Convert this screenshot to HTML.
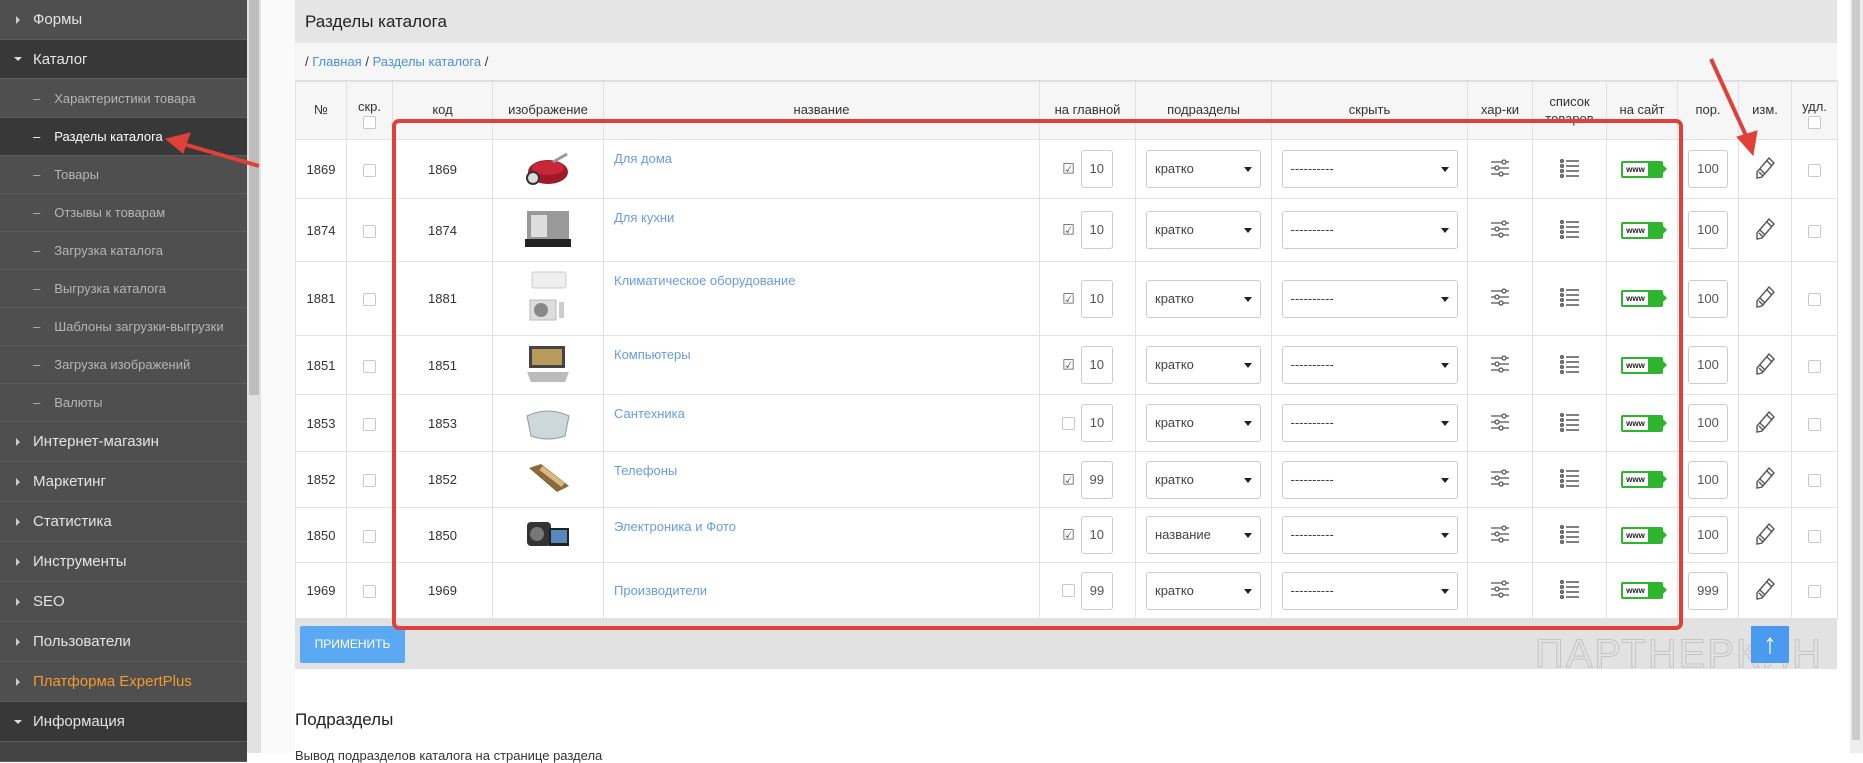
<!DOCTYPE html>
<html><head><meta charset="utf-8"><style>
*{box-sizing:border-box;margin:0;padding:0}
body{width:1863px;height:753px;overflow:hidden;background:#fff;font-family:"Liberation Sans",sans-serif;position:relative;color:#333}
#side{position:absolute;left:0;top:0;width:247px;height:753px;background:#4f4f4f}
#side div{position:absolute;left:0;width:247px;border-bottom:1px solid #5c5c5c;color:#e4e4e4;font-size:15px;display:flex;align-items:center;padding-left:33px}
#side div.sub{font-size:13px;color:#b5b5b5;padding-left:33px}
#side div.sub:before{content:"–";margin-right:14px}
#side div.m:before{content:"";position:absolute;left:16px;border-left:4px solid #ccc;border-top:4px solid transparent;border-bottom:4px solid transparent}
#side div.o:before{content:"";position:absolute;left:14px;border-top:4px solid #ddd;border-left:4px solid transparent;border-right:4px solid transparent}
#side .dk{background:#383838}
#scr{position:absolute;left:247px;top:0;width:14px;height:753px;background:#e2e2e2}
#scr i{position:absolute;left:2px;top:0;width:10px;height:395px;background:#bdbdbd}
#gut{position:absolute;left:261px;top:0;width:34px;height:753px;background:#fafafa}
#rs{position:absolute;left:1850px;top:0;width:13px;height:753px;background:#eee}
#rs i{position:absolute;left:2px;top:0;width:8px;height:740px;background:#ccc}
#hd{position:absolute;left:295px;top:0;width:1542px;height:43px;background:#e5e5e5;font-size:17px;padding:12px 10px;color:#222}
#bc{position:absolute;left:295px;top:43px;width:1542px;height:38px;background:#f6f6f6;font-size:13px;padding:11px 10px;border-bottom:1px solid #ddd}
#bc a{color:#4a90d9}
table{position:absolute;left:295px;top:81px;border-collapse:collapse;table-layout:fixed;width:1542px;font-size:13px}
td,th{border:1px solid #e2e2e2;text-align:center;vertical-align:middle;font-weight:normal;color:#333}
th{font-size:13px;background:#f6f6f6;vertical-align:bottom;padding-bottom:22px}
td.n{text-align:left;vertical-align:top;padding:11px 10px;color:#6a9be0}
.cb{display:inline-block;width:13px;height:13px;border:1px solid #c8c8c8;border-radius:2px;background:#fff;vertical-align:middle}
.inp{display:inline-block;width:32px;height:38px;border:1px solid #ccc;border-radius:3px;line-height:36px;text-align:center;vertical-align:middle;font-size:13px;color:#555;margin-left:6px}
.sel{display:inline-block;height:38px;border:1px solid #ccc;border-radius:3px;line-height:36px;text-align:left;padding-left:8px;font-size:13px;color:#444;position:relative;vertical-align:middle}
.sel:after{content:"";position:absolute;right:8px;top:16px;border-top:5px solid #222;border-left:4px solid transparent;border-right:4px solid transparent}
.chk{font-size:14px;color:#555;vertical-align:middle}
.www{display:inline-block;width:42px;height:17px;background:#2db52d;border-radius:2px;position:relative;vertical-align:middle}
.www b{position:absolute;left:2px;top:2px;width:25px;height:13px;background:#fff;font-size:8px;line-height:13px;color:#222;font-weight:bold;text-align:center}
#ft{position:absolute;left:295px;top:618px;width:1542px;height:51px;background:#e2e2e2}
#btn{position:absolute;left:300px;top:626px;width:105px;height:37px;background:#5aa9f2;color:#fff;font-size:12px;text-align:center;line-height:37px;border-radius:2px}
#up{position:absolute;left:1751px;top:626px;width:38px;height:37px;background:#4a9af0;color:#fff;font-size:28px;text-align:center;line-height:36px}
#wm{position:absolute;left:1535px;top:632px;font-size:40px;color:transparent;-webkit-text-stroke:1px #c4c4c4;letter-spacing:2px}
#red{position:absolute;left:392px;top:119px;width:1291px;height:511px;border:4px solid #e0403a;border-radius:7px}
h3{position:absolute;left:295px;top:710px;font-size:17px;font-weight:normal;color:#222}
#p{position:absolute;left:295px;top:748px;font-size:13px;color:#333}
</style></head><body>
<div id="side">
<div class="m" style="top:0;height:40px">Формы</div>
<div class="o dk" style="top:40px;height:39px">Каталог</div>
<div class="sub" style="top:79px;height:39px">Характеристики товара</div>
<div class="sub dk" style="top:118px;height:38px;color:#fff">Разделы каталога</div>
<div class="sub" style="top:156px;height:38px">Товары</div>
<div class="sub" style="top:194px;height:38px">Отзывы к товарам</div>
<div class="sub" style="top:232px;height:38px">Загрузка каталога</div>
<div class="sub" style="top:270px;height:38px">Выгрузка каталога</div>
<div class="sub" style="top:308px;height:38px">Шаблоны загрузки-выгрузки</div>
<div class="sub" style="top:346px;height:38px">Загрузка изображений</div>
<div class="sub" style="top:384px;height:38px">Валюты</div>
<div class="m" style="top:422px;height:40px">Интернет-магазин</div>
<div class="m" style="top:462px;height:40px">Маркетинг</div>
<div class="m" style="top:502px;height:40px">Статистика</div>
<div class="m" style="top:542px;height:40px">Инструменты</div>
<div class="m" style="top:582px;height:40px">SEO</div>
<div class="m" style="top:622px;height:40px">Пользователи</div>
<div class="m" style="top:662px;height:40px;color:#f39a2e">Платформа ExpertPlus</div>
<div class="o dk" style="top:702px;height:40px">Информация</div>
<div style="top:742px;height:20px;background:#444"></div>
</div>
<div id="scr"><i></i></div><div id="gut"></div><div id="rs"><i></i></div>
<div id="hd">Разделы каталога</div>
<div id="bc">/ <a>Главная</a> / <a>Разделы каталога</a> /</div>
<table>
<colgroup><col style="width:51px"><col style="width:46px"><col style="width:100px"><col style="width:111px"><col style="width:436px"><col style="width:96px"><col style="width:136px"><col style="width:196px"><col style="width:65px"><col style="width:74px"><col style="width:71px"><col style="width:61px"><col style="width:53px"><col style="width:46px"></colgroup>
<tr style="height:58px"><th>№</th><th style="padding-bottom:10px">скр.<br><span class="cb"></span></th><th>код</th><th>изображение</th><th>название</th><th>на главной</th><th>подразделы</th><th>скрыть</th><th>хар-ки</th><th style="padding-bottom:12px;line-height:17px;height:58px;overflow:hidden">список<br>товаров</th><th>на сайт</th><th>пор.</th><th>изм.</th><th style="padding-bottom:10px">удл.<br><span class="cb"></span></th></tr>
</table>
<div id="ft"></div>
<div id="btn">ПРИМЕНИТЬ</div>
<div id="wm">ПАРТНЕРКИН</div>
<div id="up">↑</div>
<div id="red"></div>
<svg style="position:absolute;left:0;top:0" width="1863" height="753"><g stroke="#e0403a" stroke-width="4" fill="#e0403a"><line x1="259" y1="166" x2="180" y2="143"/><polygon points="166,139 190,133 183,153" stroke-width="1"/><line x1="1711" y1="59" x2="1748" y2="140"/><polygon points="1753,155 1737,137 1757,131" stroke-width="1"/></g></svg>
<h3>Подразделы</h3>
<div id="p">Вывод подразделов каталога на странице раздела</div>
<script>
var S='<svg width="22" height="22" stroke="#555" fill="#fff" stroke-width="1.3"><line x1="2" y1="5" x2="20" y2="5"/><line x1="2" y1="11" x2="20" y2="11"/><line x1="2" y1="17" x2="20" y2="17"/><circle cx="15" cy="5" r="2"/><circle cx="8" cy="11" r="2"/><circle cx="12" cy="17" r="2"/></svg>';
var L='<svg width="22" height="22" stroke="#555" fill="none" stroke-width="1.5"><circle cx="3" cy="4" r="1.3"/><circle cx="3" cy="9" r="1.3"/><circle cx="3" cy="14" r="1.3"/><circle cx="3" cy="19" r="1.3"/><line x1="7" y1="4" x2="20" y2="4"/><line x1="7" y1="9" x2="20" y2="9"/><line x1="7" y1="14" x2="20" y2="14"/><line x1="7" y1="19" x2="20" y2="19"/></svg>';
var W='<span class="www"><b>www</b><span style="position:absolute;right:-4px;top:3px;border-left:5px solid #2db52d;border-top:5px solid transparent;border-bottom:5px solid transparent"></span></span>';
var P='<svg width="20" height="24" fill="none" stroke="#555" stroke-width="1.4"><path d="M14 2 L19 7 L7 21 L2 22 L2 16 Z M12 5 L17 10 M4 16 L8 20 M5 13 L10 18"/></svg>';
var im={h:'<svg width="50" height="40"><ellipse cx="25" cy="24" rx="20" ry="12" fill="#a0182a"/><ellipse cx="25" cy="20" rx="16" ry="7" fill="#c9263a"/><circle cx="10" cy="30" r="6" fill="#ddd" stroke="#333" stroke-width="2"/><path d="M30 14 L44 6" stroke="#999" stroke-width="3"/></svg>',
k:'<svg width="50" height="44"><rect x="4" y="4" width="42" height="30" fill="#999"/><rect x="8" y="8" width="16" height="22" fill="#ddd"/><rect x="2" y="32" width="46" height="8" fill="#222"/></svg>',
c:'<svg width="40" height="54"><rect x="4" y="2" width="34" height="16" rx="2" fill="#eee" stroke="#ccc"/><rect x="2" y="30" width="26" height="20" fill="#ddd" stroke="#bbb"/><circle cx="13" cy="40" r="7" fill="#888"/><rect x="31" y="32" width="5" height="16" fill="#ccc"/></svg>',
p:'<svg width="50" height="44"><rect x="6" y="4" width="36" height="22" fill="#444"/><rect x="9" y="7" width="30" height="16" fill="#b89a5a"/><path d="M4 30 L46 30 L42 40 L8 40Z" fill="#bbb"/></svg>',
s:'<svg width="50" height="40"><path d="M4 14 Q25 4 46 14 L42 34 Q25 40 8 34Z" fill="#cdd8dc" stroke="#999"/></svg>',
t:'<svg width="50" height="40"><path d="M6 10 L18 6 L46 28 L34 34Z" fill="#8a6a3a"/><path d="M18 10 L40 27" stroke="#d9b980" stroke-width="5"/></svg>',
e:'<svg width="50" height="40"><rect x="4" y="8" width="24" height="24" rx="4" fill="#333"/><circle cx="14" cy="20" r="7" fill="#777"/><rect x="26" y="14" width="20" height="18" fill="#222"/><rect x="28" y="16" width="16" height="13" fill="#5588bb"/></svg>',
n:''};
var R=[[1869,1,10,'кратко','Для дома',100,'h',59],[1874,1,10,'кратко','Для кухни',100,'k',63],[1881,1,10,'кратко','Климатическое оборудование',100,'c',74],[1851,1,10,'кратко','Компьютеры',100,'p',59],[1853,0,10,'кратко','Сантехника',100,'s',57],[1852,1,99,'кратко','Телефоны',100,'t',56],[1850,1,10,'название','Электроника и Фото',100,'e',55],[1969,0,99,'кратко','Производители',999,'n',56]];
var h='';R.forEach(function(r){h+='<tr style="height:'+r[7]+'px"><td>'+r[0]+'</td><td><span class="cb"></span></td><td>'+r[0]+'</td><td>'+im[r[6]]+'</td><td class="n"'+(r[6]=='n'?' style="vertical-align:middle"':'')+'>'+r[4]+'</td><td>'+(r[1]?'<span class="chk">☑</span>':'<span class="cb"></span>')+'<span class="inp">'+r[2]+'</span></td><td><span class="sel" style="width:115px">'+r[3]+'</span></td><td><span class="sel" style="width:176px">----------</span></td><td>'+S+'</td><td>'+L+'</td><td>'+W+'</td><td><span class="inp" style="width:40px;margin:0">'+r[5]+'</span></td><td>'+P+'</td><td><span class="cb"></span></td></tr>';});
document.querySelector('table tr').insertAdjacentHTML('afterend',h);
</script>
</body></html>
